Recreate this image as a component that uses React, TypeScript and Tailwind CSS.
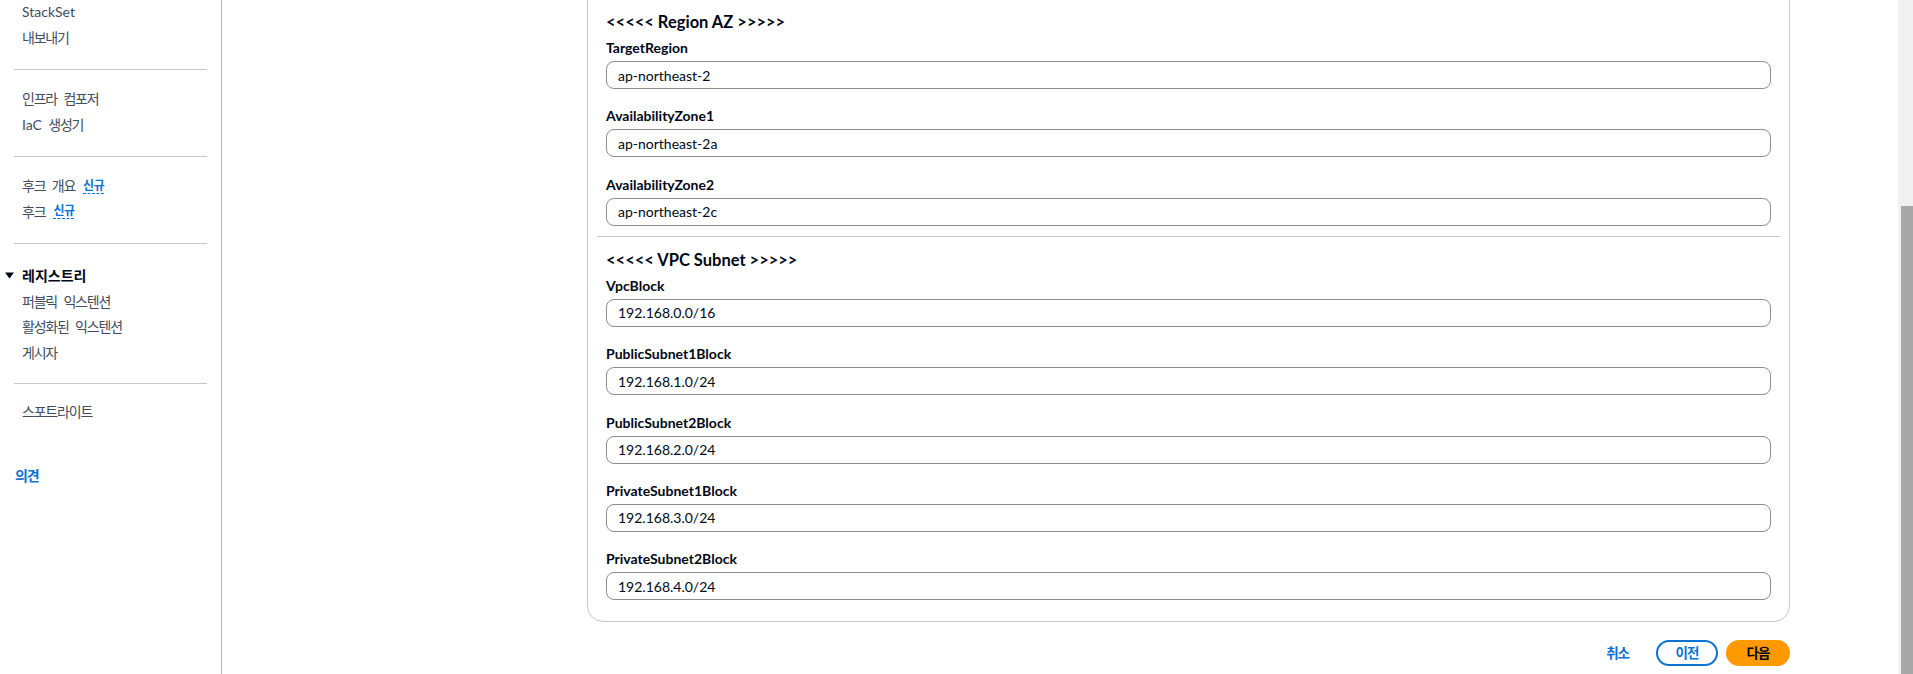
import React from "react"

const regionFields = [
  { label: "TargetRegion", value: "ap-northeast-2" },
  { label: "AvailabilityZone1", value: "ap-northeast-2a" },
  { label: "AvailabilityZone2", value: "ap-northeast-2c" },
]

const subnetFields = [
  { label: "VpcBlock", value: "192.168.0.0/16" },
  { label: "PublicSubnet1Block", value: "192.168.1.0/24" },
  { label: "PublicSubnet2Block", value: "192.168.2.0/24" },
  { label: "PrivateSubnet1Block", value: "192.168.3.0/24" },
  { label: "PrivateSubnet2Block", value: "192.168.4.0/24" },
]

function NewBadge() {
  return (
    <span className="ml-[8px] border-b border-dashed border-[#0972d3] text-[12px] font-bold leading-[15px] tracking-[-0.5px] text-[#0972d3]">
      신규
    </span>
  )
}

function NavItem({ children }: { children: React.ReactNode }) {
  return (
    <div className="flex h-[25.5px] items-center pl-[22px] tracking-[-1.2px] [word-spacing:4px]">{children}</div>
  )
}

function Divider() {
  return <div className="mx-[14px] h-px bg-[#c6c6cd]" />
}

function Field({ label, value }: { label: string; value: string }) {
  return (
    <div className="flex flex-col">
      <label className="text-[14px] font-bold leading-[20px] text-[#000716]">{label}</label>
      <input
        readOnly
        value={value}
        className="mt-[3px] h-[28px] w-full rounded-[8px] border border-[#8c8c94] bg-white px-[11px] text-[14px] text-[#000716] outline-none"
      />
    </div>
  )
}

function Section({ title, fields, last, className }: { title: string; fields: { label: string; value: string }[]; last?: boolean; className?: string }) {
  return (
    <section className={`px-[9px] ${last ? "pb-[21px]" : "border-b border-[#c6c6cd] pb-[10px]"} ${className ?? ""}`}>
      <h2 className="text-[16.5px] font-bold leading-[24px] text-[#000716]">{title}</h2>
      <div className="mt-[4px] flex flex-col gap-[17.4px]">
        {fields.map((f) => (
          <Field key={f.label} label={f.label} value={f.value} />
        ))}
      </div>
    </section>
  )
}

export default function App() {
  return (
    <div className="flex h-[674px] w-full overflow-hidden bg-white font-['Lato','Noto_Sans_CJK_KR',sans-serif]">
      {/* side navigation */}
      <aside className="-mt-[1px] w-[222px] shrink-0 border-r border-[#b4b4bb] text-[14px] text-[#414d5c]">
        <div className="pb-[19px]">
          <div className="flex h-[25.5px] items-center pl-[22px]">StackSet</div>
          <NavItem>내보내기</NavItem>
        </div>
        <Divider />
        <div className="pt-[16px] pb-[19px]">
          <NavItem>인프라 컴포저</NavItem>
          <NavItem>
            <span className="tracking-normal">IaC</span>&nbsp;생성기
          </NavItem>
        </div>
        <Divider />
        <div className="pt-[16px] pb-[19px]">
          <NavItem>
            후크 개요 <NewBadge />
          </NavItem>
          <NavItem>
            후크 <NewBadge />
          </NavItem>
        </div>
        <Divider />
        <div className="pt-[19px] pb-[18px]">
          <div className="flex h-[25.5px] items-center pl-[5px] font-bold text-[#000716]">
            <svg width="9" height="7" viewBox="0 0 9 7" className="mr-[8px]">
              <path d="M0 0.5h9L4.5 6.5z" fill="#000716" />
            </svg>
            레지스트리
          </div>
          <NavItem>퍼블릭 익스텐션</NavItem>
          <NavItem>활성화된 익스텐션</NavItem>
          <NavItem>게시자</NavItem>
        </div>
        <Divider />
        <div className="pt-[15px]">
          <NavItem>스포트라이트</NavItem>
        </div>
        <div className="mt-[38px] flex h-[25.5px] items-center pl-[15px] font-bold tracking-[-1.2px] text-[#0972d3]">의견</div>
      </aside>

      {/* main content */}
      <main className="min-w-0 flex-1 pl-[365px] pr-[108px]">
        <div className="-mt-[20px] rounded-[16px] border border-[#c6c6cd] bg-white px-[9px]">
          <Section title="<<<<< Region AZ >>>>>" fields={regionFields} className="pt-[29px]" />
          <Section title="<<<<< VPC Subnet >>>>>" fields={subnetFields} last className="pt-[11px]" />
        </div>
        <div className="mt-[18px] flex items-center justify-end gap-[8px] text-[13.5px] font-bold tracking-[-1px]">
          <button className="h-[26px] px-[19px] text-[#0972d3]">취소</button>
          <button className="h-[26px] w-[62px] rounded-full border-2 border-[#0972d3] text-[#0972d3]">이전</button>
          <button className="h-[26px] w-[64px] rounded-full bg-[#ff9900] text-[#000716]">다음</button>
        </div>
      </main>

      {/* scrollbar */}
      <div className="flex w-[15px] shrink-0 flex-col bg-[#f1f1f1]">
        <div className="h-[206px]" />
        <div className="ml-[3px] flex-1 bg-[#a8a8a8]" />
      </div>
    </div>
  )
}
